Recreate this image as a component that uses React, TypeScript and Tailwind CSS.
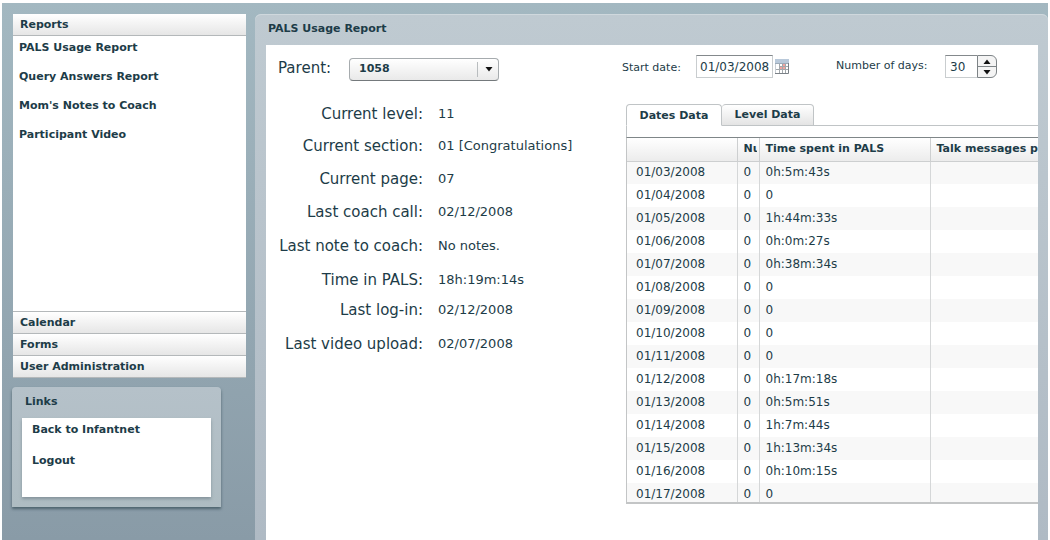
import { useState } from "react";
import clsx from "clsx";

const reports = ["PALS Usage Report", "Query Answers Report", "Mom's Notes to Coach", "Participant Video"];

const sections = ["Calendar", "Forms", "User Administration"];

const details = [
  { label: "Current level:", value: "11", space: "mt-0" },
  { label: "Current section:", value: "01 [Congratulations]", space: "mt-3" },
  { label: "Current page:", value: "07", space: "mt-[13px]" },
  { label: "Last coach call:", value: "02/12/2008", space: "mt-[13px]" },
  { label: "Last note to coach:", value: "No notes.", space: "mt-3.5" },
  { label: "Time in PALS:", value: "18h:19m:14s", space: "mt-3.5" },
  { label: "Last log-in:", value: "02/12/2008", space: "mt-2.5" },
  { label: "Last video upload:", value: "02/07/2008", space: "mt-3.5" },
];

const rows = [
  ["01/03/2008", "0", "0h:5m:43s"],
  ["01/04/2008", "0", "0"],
  ["01/05/2008", "0", "1h:44m:33s"],
  ["01/06/2008", "0", "0h:0m:27s"],
  ["01/07/2008", "0", "0h:38m:34s"],
  ["01/08/2008", "0", "0"],
  ["01/09/2008", "0", "0"],
  ["01/10/2008", "0", "0"],
  ["01/11/2008", "0", "0"],
  ["01/12/2008", "0", "0h:17m:18s"],
  ["01/13/2008", "0", "0h:5m:51s"],
  ["01/14/2008", "0", "1h:7m:44s"],
  ["01/15/2008", "0", "1h:13m:34s"],
  ["01/16/2008", "0", "0h:10m:15s"],
  ["01/17/2008", "0", "0"],
];

const tabs = ["Dates Data", "Level Data"];

function AccordionHeader({ title }: { title: string }) {
  return (
    <button className="block h-[22px] w-full border-b border-[#b4b8ba] bg-linear-to-b from-white to-[#e6e6e6] px-[7px] pt-0.5 text-left font-bold">
      {title}
    </button>
  );
}

function Sidebar() {
  return (
    <aside className="w-[234px] shrink-0">
      <nav className="ml-px bg-white">
        <AccordionHeader title="Reports" />
        <ul className="h-[276px] space-y-[13px] border-b border-[#b4b8ba] px-1.5 pt-1 leading-4">
          {reports.map((r) => (
            <li key={r}>
              <a href="#" className="font-bold">
                {r}
              </a>
            </li>
          ))}
        </ul>
        {sections.map((s) => (
          <AccordionHeader key={s} title={s} />
        ))}
      </nav>

      <section className="mt-[9px] w-[209px] rounded-t bg-linear-to-b from-[#b5c1c9] to-[#aebcc2] px-2.5 pb-2.5 shadow-[0_2px_3px_#4c626c]">
        <h2 className="h-[31px] pl-[3px] font-bold leading-[30px]">Links</h2>
        <ul className="h-[79px] space-y-[15px] bg-white px-2.5 pt-1 leading-4 shadow-[0_2px_3px_#84939b]">
          <li>
            <a href="#" className="font-bold">
              Back to Infantnet
            </a>
          </li>
          <li>
            <a href="#" className="font-bold">
              Logout
            </a>
          </li>
        </ul>
      </section>
    </aside>
  );
}

function CalendarIcon() {
  return (
    <svg width="14" height="15" viewBox="0 0 14 15" aria-hidden>
      <rect width="14" height="15" fill="#fff" />
      <rect width="14" height="4" fill="#b9c9da" />
      <path d="M0.5 4V15" stroke="#c8ced4" />
      <path d="M4 7.5H13M1 10.5H13M4.5 5V14M7.5 5V14M10.5 5V14" stroke="#a3a8ac" />
      <path d="M0 4.5H14" stroke="#9dabb9" />
      <path d="M13.5 4V14.5H0" fill="none" stroke="#7b8187" />
      <path d="M8 5h2v2H8zM5 8h2v2H5zM8 8h2v2H8z" fill="#f3a39e" />
    </svg>
  );
}

function Arrow({ up }: { up?: boolean }) {
  return (
    <svg width="8" height="5" viewBox="0 0 8 5" aria-hidden>
      <path d={up ? "M0.5 5L4 0.5L7.5 5Z" : "M0.5 0L4 4.5L7.5 0Z"} fill="#111" />
    </svg>
  );
}

function ParentDetails() {
  return (
    <div className="w-[356px] shrink-0 pl-3 pt-[13px]">
      <div className="flex h-[23px] items-center">
        <label htmlFor="parent" className="w-[71px] pb-1 text-[15px] leading-5">
          Parent:
        </label>
        <div className="relative">
          <select
            id="parent"
            className="block h-[23px] w-[150px] appearance-none rounded border border-[#a6abae] border-b-[#74797c] bg-linear-to-b from-white to-[#e9e9e9] pl-[9px] font-bold"
          >
            <option>1058</option>
          </select>
          <span className="pointer-events-none absolute inset-y-1 right-0 grid w-[22px] place-items-center border-l border-[#b9bdbf]">
            <Arrow />
          </span>
        </div>
      </div>

      <dl className="mt-[22px]">
        {details.map((d) => (
          <div
            key={d.label}
            className={clsx("grid h-5 grid-cols-[145px_1fr] items-center gap-x-[15px] leading-5", d.space)}
          >
            <dt className="whitespace-nowrap text-right text-[15px]">{d.label}</dt>
            <dd className="pt-px text-[13px]">{d.value}</dd>
          </div>
        ))}
      </dl>
    </div>
  );
}

function UsageTable() {
  return (
    <div className="h-[367px] overflow-hidden border-b-2 border-l border-t border-[#c3c5c6] border-t-[#7f8688]">
      <table className="w-full min-w-[520px] table-fixed border-collapse text-left leading-4">
        <colgroup>
          <col className="w-[110px]" />
          <col className="w-[22px]" />
          <col className="w-[171px]" />
          <col />
        </colgroup>
        <thead>
          <tr className="h-[23px] bg-linear-to-b from-white to-[#ececec] [&>th]:border-r [&>th]:border-b [&>th]:border-[#cdcfd0] [&>th]:p-0 [&>th]:pl-1.5 [&>th]:font-bold">
            <th />
            <th>
              <span className="mr-0.5 block overflow-hidden">Number</span>
            </th>
            <th>Time spent in PALS</th>
            <th>Talk messages posted</th>
          </tr>
        </thead>
        <tbody className="text-[12px]">
          {rows.map(([date, count, time]) => (
            <tr
              key={date}
              className="h-[23px] odd:bg-[#f8f8f8] [&>td]:border-r [&>td]:border-[#d5d7d8] [&>td]:p-0 [&>td]:pb-0.5 [&>td]:pl-1.5"
            >
              <td>
                <span className="pl-[3px]">{date}</span>
              </td>
              <td>{count}</td>
              <td>{time}</td>
              <td />
            </tr>
          ))}
        </tbody>
      </table>
    </div>
  );
}

function UsageData() {
  const [active, setActive] = useState("Dates Data");
  const [date, setDate] = useState("01/03/2008");
  const [days, setDays] = useState(30);

  return (
    <div className="min-w-0 flex-1 overflow-hidden pt-[10px]">
      <form className="flex h-[23px] items-center whitespace-nowrap" onSubmit={(e) => e.preventDefault()}>
        <label htmlFor="start" className="w-[74px] shrink-0 pt-1">
          Start date:
        </label>
        <input
          id="start"
          value={date}
          onChange={(e) => setDate(e.target.value)}
          className="h-[23px] w-[77px] shrink-0 border border-[#c9cdcf] border-t-[#84898c] pl-[3px] text-[12px] outline-none"
        />
        <button type="button" aria-label="Open calendar" className="ml-0.5 shrink-0">
          <CalendarIcon />
        </button>
        <label htmlFor="days" className="ml-[47px] w-[109px] shrink-0">
          Number of days:
        </label>
        <input
          id="days"
          value={days}
          onChange={(e) => setDays(Number(e.target.value) || 0)}
          className="h-[23px] w-8 shrink-0 border border-r-0 border-[#c9cdcf] border-t-[#84898c] pl-1 text-[12px] outline-none"
        />
        <div className="flex h-[23px] w-5 shrink-0 flex-col overflow-hidden rounded-r-md border border-[#7d8386] bg-[#f4f4f4]">
          <button
            type="button"
            aria-label="More days"
            onClick={() => setDays(days + 1)}
            className="grid flex-1 place-items-center border-b border-[#7d8386]"
          >
            <Arrow up />
          </button>
          <button
            type="button"
            aria-label="Fewer days"
            onClick={() => setDays(days - 1)}
            className="grid flex-1 place-items-center"
          >
            <Arrow />
          </button>
        </div>
      </form>

      <div className="ml-1">
        <div role="tablist" className="mt-[26px] flex h-[22px]">
          {tabs.map((t) => (
            <button
              key={t}
              role="tab"
              aria-selected={active === t}
              onClick={() => setActive(t)}
              className={clsx(
                "shrink-0 rounded-t border border-[#c0c4c6] font-bold",
                active === t
                  ? "w-24 border-b-white bg-white pt-0.5"
                  : "w-[92px] border-l-0 bg-linear-to-b from-white to-[#e4e4e4]",
              )}
            >
              {t}
            </button>
          ))}
          <div className="flex-1 border-b border-[#c0c4c6]" />
        </div>
        <div className="h-[11px] border-l border-[#c0c4c6]" />
        <UsageTable />
      </div>
    </div>
  );
}

export default function App() {
  return (
    <div className="h-screen overflow-hidden bg-white px-0.5 pt-[3px] font-['DejaVu_Sans',Verdana,sans-serif] text-[11px] text-[#1d3c48]">
      <div className="flex h-full gap-[9px] bg-linear-to-b from-[#a3b8c1] to-[#899ba7] pl-2.5 pt-[11px]">
        <Sidebar />
        <main className="flex min-w-0 flex-1 flex-col rounded-t-md bg-linear-to-b from-[#bfcad1] to-[#afbac4] pl-[11px] pr-2.5 shadow-[inset_0_1px_0_#cfd8dd]">
          <h1 className="h-[31px] shrink-0 pl-0.5 font-bold leading-[30px]">PALS Usage Report</h1>
          <div className="flex min-h-0 flex-1 overflow-hidden bg-white">
            <ParentDetails />
            <UsageData />
          </div>
        </main>
      </div>
    </div>
  );
}
